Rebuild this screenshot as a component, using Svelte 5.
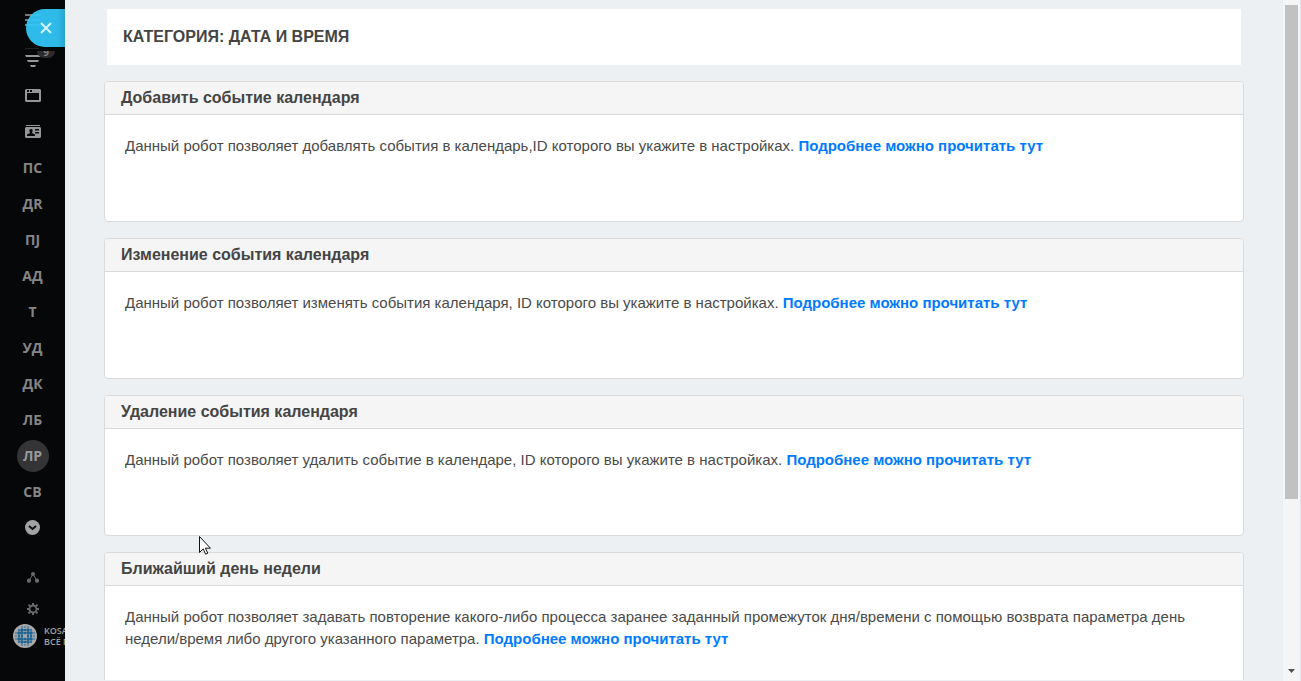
<script>
  const sections = [
    { text: "ПС" },
    { text: "ДR" },
    { text: "ПJ" },
    { text: "АД" },
    { text: "Т" },
    { text: "УД" },
    { text: "ДК" },
    { text: "ЛБ" },
    { text: "ЛР", active: true },
    { text: "СВ" },
  ];

  const robots = [
    {
      title: "Добавить событие календаря",
      text: "Данный робот позволяет добавлять события в календарь,ID которого вы укажите в настройках.",
    },
    {
      title: "Изменение события календаря",
      text: "Данный робот позволяет изменять события календаря, ID которого вы укажите в настройках.",
    },
    {
      title: "Удаление события календаря",
      text: "Данный робот позволяет удалить событие в календаре, ID которого вы укажите в настройках.",
    },
    {
      title: "Ближайший день недели",
      text: "Данный робот позволяет задавать повторение какого-либо процесса заранее заданный промежуток дня/времени с помощью возврата параметра день недели/время либо другого указанного параметра.",
    },
  ];

  // dotted pattern of the round logo
  const dots = [];
  for (let row = -3; row <= 3; row++) {
    for (let col = -3; col <= 3; col++) {
      const far = Math.abs(row) + Math.abs(col);
      const edge = Math.max(Math.abs(row), Math.abs(col));
      if (far > 4 || far === 0) continue;
      let r = 1.8;
      if (edge === 3) r = 0.8;
      else if (far === 4) r = 1;
      else if (row === 0 || col === 0) r = 1.2;
      dots.push({ x: 12 + col * 3, y: 12 + row * 3, r });
    }
  }
</script>

<div class="page">
  <aside class="sidebar">
    <nav class="menu">
      <button class="item toggle" aria-label="Меню">
        <svg width="16" height="12" viewBox="0 0 16 12" fill="currentColor">
          <path d="M0 0h16v2H0zM0 5h16v2H0zM0 10h16v2H0z" />
        </svg>
      </button>
      <a class="item filter" href="#filter" aria-label="Фильтр">
        <svg width="16" height="12" viewBox="0 0 16 12" fill="currentColor">
          <path d="M0 0h16l-1 2H1zM2 5h12l-1 2H3zM5 10h6l-1 2H6z" />
        </svg>
        <span class="badge">9</span>
      </a>
      <a class="item" href="#window" aria-label="Окно">
        <svg width="16" height="13" viewBox="0 0 16 13" fill="currentColor" fill-rule="evenodd">
          <path d="M1 0h14l1 1v11l-1 1H1l-1-1V1zM2 4v7h12V4zM2 1v2h2V1zM5 1v2h2V1z" />
        </svg>
      </a>
      <a class="item" href="#contacts" aria-label="Контакты">
        <svg width="16" height="13" viewBox="0 0 16 13" fill="currentColor" fill-rule="evenodd">
          <path
            d="M1 0h14v1H1zM1 2h14l1 1v9l-1 1H1l-1-1V3zM6 4C4 4 4 6 5 8L2 9.5V11h8V9.5L7 8c1-2 1-4-1-4zM10 4v1.500h4V4zM10 7v1.500h4V7z"
          />
        </svg>
      </a>
      {#each sections as section}
        <a class="item" href="#section">
          <span class="letters" class:active={section.active}>{section.text}</span>
        </a>
      {/each}
      <button class="item" aria-label="Ещё">
        <svg width="15" height="15" viewBox="0 0 15 15">
          <circle cx="7.5" cy="7.5" r="7.5" fill="#a3a3a3" />
          <path d="M4 6l3.5 3L11 6" fill="none" stroke="#111" stroke-width="2" />
        </svg>
      </button>
    </nav>

    <div class="tools">
      <button class="tool" aria-label="Структура">
        <svg width="12" height="11" viewBox="0 0 12 11" fill="currentColor">
          <path d="M6 2L2 9M6 2l4 7" stroke="currentColor" />
          <circle cx="6" cy="2" r="2" />
          <circle cx="2" cy="8.7" r="2.1" />
          <circle cx="10" cy="8.7" r="2.1" />
        </svg>
      </button>
      <button class="tool" aria-label="Настройки">
        <svg width="12" height="12" viewBox="0 0 12 12" fill="none" stroke="currentColor">
          <circle cx="6" cy="6" r="3.5" stroke-width="1.8" />
          <path
            d="M6 0v2M6 10v2M0 6h2M10 6h2M1.600 1.600l1.600 1.600M8.800 8.800l1.600 1.600M1.600 10.400l1.600-1.600M8.800 3.200l1.600-1.600"
            stroke-width="2"
          />
        </svg>
      </button>
    </div>

    <div class="brand">
      <svg width="24" height="24" viewBox="0 0 24 24">
        <circle cx="12" cy="12" r="12" fill="#a8a8a8" />
        {#each dots as dot}
          <circle cx={dot.x} cy={dot.y} r={dot.r} fill="#1a6496" />
        {/each}
        <path d="M10 10l4 4M14 10l-4 4" stroke="#a8a8a8" />
      </svg>
      <span>KOSAREV<br />ВСЁ ПРОСТО</span>
    </div>

    <button class="close" aria-label="Закрыть">
      <svg width="12" height="12" viewBox="0 0 12 12" stroke="#d5f2fc" stroke-width="2">
        <path d="M1 1l10 10M11 1L1 11" />
      </svg>
    </button>
  </aside>

  <main>
    <h1>КАТЕГОРИЯ: ДАТА И ВРЕМЯ</h1>
    {#each robots as robot}
      <section class="card">
        <h2>{robot.title}</h2>
        <p>{robot.text} <a href="#more">Подробнее можно прочитать тут</a></p>
      </section>
    {/each}
  </main>

  <div class="scrollbar">
    <div class="thumb"></div>
    <svg width="7" height="4" viewBox="0 0 7 4" fill="#505050"><path d="M0 0h7L3.500 4z" /></svg>
  </div>

  <svg class="cursor" width="12" height="19" viewBox="0 0 12 19">
    <path
      d="M.5.5v16l3.700-3.600 2.400 5.300 2.200-1-2.400-5h5z"
      fill="#fff"
      stroke="#111"
    />
  </svg>
</div>

<style>
  :global(body) {
    margin: 0;
  }

  .page {
    position: relative;
    display: flex;
    height: 100vh;
    overflow: hidden;
    background-color: #ecf0f3;
    color: #444;
    font-family: "Liberation Sans", Arial, sans-serif;
  }

  button {
    padding: 0;
    border: none;
    background: none;
    cursor: pointer;
  }

  .sidebar {
    position: relative;
    flex: 0 0 65px;
    overflow: hidden;
    background-color: #060709;
    font-family: "Open Sans", sans-serif;
  }

  .menu {
    display: flex;
    flex-direction: column;
    padding-top: 6px;
  }

  .item {
    position: relative;
    display: flex;
    align-items: center;
    justify-content: center;
    width: 100%;
    height: 36px;
    color: #969696;
    text-decoration: none;
  }

  .item svg {
    margin-bottom: 1px;
  }

  .toggle {
    height: 28px;
    margin-bottom: 8px;
    color: #777;
  }

  .filter {
    align-items: flex-end;
  }

  .filter svg {
    margin-bottom: 11px;
  }

  .filter::before {
    content: "";
    position: absolute;
    left: 25px;
    top: 6px;
    width: 14px;
    height: 1px;
    background-color: #222;
  }

  .badge {
    position: absolute;
    left: 37px;
    top: 9px;
    display: flex;
    align-items: flex-end;
    justify-content: center;
    width: 18px;
    height: 7px;
    overflow: hidden;
    border-radius: 0 0 7px 7px;
    background-color: #2a2c2f;
    color: #85807c;
    font-size: 10px;
    font-weight: 700;
    line-height: 12px;
  }

  .letters {
    width: 32px;
    border-radius: 50%;
    color: #858585;
    font-size: 14px;
    font-weight: 700;
    line-height: 32px;
    text-align: center;
  }

  .letters.active {
    background-color: #343436;
    color: #999;
  }

  .tools {
    padding-top: 16px;
  }

  .tool {
    display: flex;
    align-items: center;
    justify-content: center;
    width: 100%;
    height: 31px;
    color: #696969;
  }

  .brand {
    display: flex;
    align-items: center;
    gap: 7px;
    padding-left: 13px;
    color: #a0a0a0;
    font-size: 9px;
    font-weight: 600;
    line-height: 11px;
    white-space: nowrap;
  }

  .brand svg {
    flex: none;
  }

  .close {
    position: absolute;
    top: 9px;
    right: 0;
    display: flex;
    align-items: center;
    width: 39px;
    height: 38px;
    padding-left: 14px;
    border-radius: 19px 0 0 19px;
    background: linear-gradient(to right, #31c6f7f0 80%, #29aedbf0);
  }

  main {
    flex: 1;
    min-width: 0;
    margin-bottom: 1px;
    padding: 9px 39px 0;
    overflow: hidden;
  }

  h1 {
    margin: 0 3px 16px 3px;
    padding: 16px;
    background-color: #fff;
    font-size: 16px;
    line-height: 24px;
  }

  .card {
    box-sizing: border-box;
    min-height: 141px;
    margin-bottom: 16px;
    border: 1px solid #dadada;
    border-radius: 4px;
    background-color: #fff;
  }

  h2 {
    margin: 0;
    padding: 4px 16px;
    border-bottom: 1px solid #dadada;
    border-radius: 3px 3px 0 0;
    background-color: #f5f5f5;
    font-size: 16px;
    line-height: 24px;
  }

  p {
    margin: 0;
    padding: 20px 20px 64px;
    color: #4a4a4a;
    font-size: 15px;
    line-height: 22px;
  }

  p a {
    color: #007bff;
    font-weight: 700;
    text-decoration: none;
  }

  .scrollbar {
    box-sizing: border-box;
    display: flex;
    flex: 0 0 18px;
    flex-direction: column;
    align-items: center;
    justify-content: space-between;
    padding: 5px 1px 8px 0;
    border-right: 1px solid #dfe6ec;
    background-color: #f5f5f5;
  }

  .thumb {
    width: 13px;
    height: 74%;
    background-color: #c1c1c1;
  }

  .cursor {
    position: absolute;
    left: 199px;
    top: 536px;
  }
</style>
